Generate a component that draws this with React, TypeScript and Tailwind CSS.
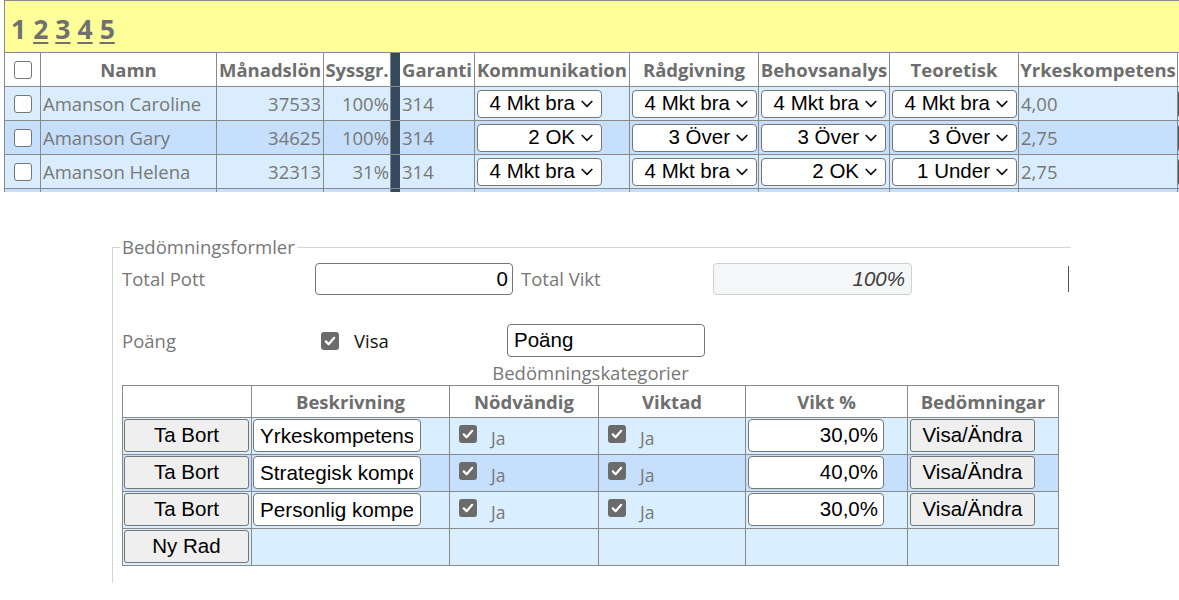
import React from "react";

const SANS = "font-['Open_Sans','Noto_Sans',sans-serif]";
const ARIAL = "font-['Liberation_Sans',Arial,sans-serif]";

function Chevron() {
  return (
    <svg width="12" height="8" viewBox="0 0 12 8" className="shrink-0">
      <path d="M1.2 1.5 L6 6.3 L10.8 1.5" fill="none" stroke="#111" strokeWidth="1.7" strokeLinecap="round" strokeLinejoin="round" />
    </svg>
  );
}

function Sel({ v }: { v: string }) {
  return (
    <div className={`ml-[2px] flex h-[28px] w-[125px] shrink-0 items-center justify-end gap-[6px] rounded-[4px] border border-[#767676] bg-white pr-[8px] text-[20.5px] leading-none text-black ${ARIAL}`}>
      {v ? <span className="whitespace-nowrap">{v}</span> : null}
      {v ? <Chevron /> : null}
    </div>
  );
}

function EmptyBox() {
  return <span className="block h-[18px] w-[18px] rounded-[3px] border border-[#767676] bg-white" />;
}

function GrayCheck() {
  return (
    <span className="flex h-[18px] w-[18px] shrink-0 items-center justify-center rounded-[3px] bg-[#6b6b6b]">
      <svg width="14" height="14" viewBox="0 0 14 14">
        <path d="M2.8 7.4 L5.6 10.2 L11.2 3.8" fill="none" stroke="#fff" strokeWidth="2.2" strokeLinecap="round" strokeLinejoin="round" />
      </svg>
    </span>
  );
}

type Row = {
  id: string;
  name: string;
  lon: string;
  sys: string;
  gar: string;
  k: string[];
  y: string;
  bg: string;
};

const rows: Row[] = [
  { id: "r1", name: "Amanson Caroline", lon: "37533", sys: "100%", gar: "314", k: ["4 Mkt bra", "4 Mkt bra", "4 Mkt bra", "4 Mkt bra"], y: "4,00", bg: "bg-[#d9edfe]" },
  { id: "r2", name: "Amanson Gary", lon: "34625", sys: "100%", gar: "314", k: ["2 OK", "3 Över", "3 Över", "3 Över"], y: "2,75", bg: "bg-[#c6dffc]" },
  { id: "r3", name: "Amanson Helena", lon: "32313", sys: "31%", gar: "314", k: ["4 Mkt bra", "4 Mkt bra", "2 OK", "1 Under"], y: "2,75", bg: "bg-[#d9edfe]" },
  { id: "r4", name: "", lon: "", sys: "", gar: "", k: ["", "", "", ""], y: "", bg: "bg-[#c6dffc]" },
];

const cell = "flex h-full shrink-0 items-center border-r border-[#8a8a8a]";

function TopHeader() {
  const h = `${cell} justify-center text-[18.5px] font-bold text-[#6e6e6e] whitespace-nowrap`;
  return (
    <div className="flex h-[34px] border-b border-[#8a8a8a] bg-white">
      <div className={`${cell} w-[36px] justify-center`}><EmptyBox /></div>
      <div className={`${h} w-[176px]`}>Namn</div>
      <div className={`${h} w-[107px]`}>Månadslön</div>
      <div className={`${h} w-[67px]`}>Syssgr.</div>
      <div className="h-full w-[9px] shrink-0 bg-[#34495e]" />
      <div className={`${h} w-[75px] justify-start pl-[2px]`}>Garanti</div>
      <div className={`${h} w-[155px]`}>Kommunikation</div>
      <div className={`${h} w-[129px]`}>Rådgivning</div>
      <div className={`${h} w-[131px]`}>Behovsanalys</div>
      <div className={`${h} w-[129px]`}>Teoretisk</div>
      <div className={`${h} w-[159px]`}>Yrkeskompetens</div>
      <div className={`${cell} w-[120px]`} />
    </div>
  );
}

function TopRow({ r }: { r: Row }) {
  const t = `${cell} text-[18.5px] text-[#777] whitespace-nowrap`;
  return (
    <div className={`flex h-[34px] border-b border-[#8a8a8a] ${r.bg}`}>
      <div className={`${cell} w-[36px] justify-center`}><EmptyBox /></div>
      <div className={`${t} w-[176px] pl-[2px]`}>{r.name}</div>
      <div className={`${t} w-[107px] justify-end pr-[2px]`}>{r.lon}</div>
      <div className={`${t} w-[67px] justify-end pr-[1px]`}>{r.sys}</div>
      <div className="h-full w-[9px] shrink-0 bg-[#34495e]" />
      <div className={`${t} w-[75px] pl-[2px]`}>{r.gar}</div>
      <div className={`${cell} w-[155px]`}><Sel v={r.k[0]} /></div>
      <div className={`${cell} w-[129px]`}><Sel v={r.k[1]} /></div>
      <div className={`${cell} w-[131px]`}><Sel v={r.k[2]} /></div>
      <div className={`${cell} w-[129px]`}><Sel v={r.k[3]} /></div>
      <div className={`${t} w-[159px] pl-[2px]`}>{r.y}</div>
      <div className={`${cell} w-[120px]`}>
        <div className="h-[28px] w-[110px] rounded-[4px] border-2 border-[#555] bg-white" />
      </div>
    </div>
  );
}

type Cat = { name: string; vikt: string; bg: string };
const cats: Cat[] = [
  { name: "Yrkeskompetens", vikt: "30,0%", bg: "bg-[#d9eefe]" },
  { name: "Strategisk kompetens", vikt: "40,0%", bg: "bg-[#c6dffc]" },
  { name: "Personlig kompetens", vikt: "30,0%", bg: "bg-[#d9eefe]" },
];

const btn = `flex h-[33px] items-center justify-center rounded-[3px] border border-[#767676] bg-[#efefef] text-[20.5px] leading-none text-black ${ARIAL}`;
const bcell = "h-full shrink-0 border-r border-[#8a8a8a]";

function CatRow({ c }: { c: Cat }) {
  return (
    <div className={`flex h-[37px] border-b border-[#8a8a8a] ${c.bg}`}>
      <div className={`${bcell} w-[129px] pt-[1px] pl-[1px]`}>
        <div className={`${btn} w-[125px]`}>Ta Bort</div>
      </div>
      <div className={`${bcell} w-[198px] pt-[1px] pl-[1px]`}>
        <input
          readOnly
          value={c.name}
          className={`h-[33px] w-[168px] rounded-[4px] border border-[#767676] bg-white pl-[6px] pr-[7px] text-[20.7px] text-black outline-none ${ARIAL}`}
        />
      </div>
      <div className={`${bcell} flex w-[149px] items-start pl-[9px]`}>
        <span className="mt-[7px]"><GrayCheck /></span>
        <span className="ml-[14px] mt-[10px] text-[17.5px] leading-[20px] text-[#777]">Ja</span>
      </div>
      <div className={`${bcell} flex w-[147px] items-start pl-[9px]`}>
        <span className="mt-[7px]"><GrayCheck /></span>
        <span className="ml-[14px] mt-[10px] text-[17.5px] leading-[20px] text-[#777]">Ja</span>
      </div>
      <div className={`${bcell} w-[162px] pt-[1px] pl-[2px]`}>
        <div className={`flex h-[33px] w-[136px] items-center justify-end rounded-[4px] border border-[#767676] bg-white pr-[5px] text-[20.5px] leading-none text-black ${ARIAL}`}>
          {c.vikt}
        </div>
      </div>
      <div className={`${bcell} w-[151px] pt-[1px] pl-[2px]`}>
        <div className={`${btn} w-[125px]`}>Visa/Ändra</div>
      </div>
    </div>
  );
}

export default function App() {
  const hc = `${bcell} flex items-center justify-center text-[18.5px] font-bold text-[#6e6e6e]`;
  return (
    <div className={`h-[600px] w-[1179px] overflow-hidden bg-white ${SANS}`}>
      {/* top grid */}
      <div className="ml-[4px] h-[192px] overflow-hidden border-l border-t border-[#8a8a8a]">
        <div className="flex h-[52px] items-start gap-[7px] border-b border-[#8a8a8a] bg-[#ffff99] pl-[6px] pt-[10px] text-[26.5px] font-bold leading-[36px] text-[#707070]">
          <span>1</span>
          <span className="underline decoration-2 underline-offset-[3px]">2</span>
          <span className="underline decoration-2 underline-offset-[3px]">3</span>
          <span className="underline decoration-2 underline-offset-[3px]">4</span>
          <span className="underline decoration-2 underline-offset-[3px]">5</span>
        </div>
        <div className="w-[1400px]">
          <TopHeader />
          {rows.map((r) => (
            <TopRow key={r.id} r={r} />
          ))}
        </div>
      </div>

      {/* formulas */}
      <fieldset className="ml-[112px] mt-[43px] w-[959px] border-l border-t border-[#cfd9cf] pb-[17px] pl-[9px]">
        <legend className="-ml-[2px] px-[2px] text-[18.5px] leading-[24px] text-[#777]">Bedömningsformler</legend>

        <div className="mt-[4px] flex h-[32px] items-center">
          <div className="w-[193px] shrink-0 text-[18.5px] text-[#777]">Total Pott</div>
          <div className={`flex h-[32px] w-[198px] shrink-0 items-center justify-end rounded-[4px] border border-[#767676] bg-white pr-[4px] text-[20.5px] leading-none text-black ${ARIAL}`}>0</div>
          <div className="ml-[8px] w-[192px] shrink-0 text-[18.5px] text-[#777]">Total Vikt</div>
          <div className={`flex h-[32px] w-[199px] shrink-0 items-center justify-end rounded-[4px] border border-[#cbd3cb] bg-[#f5f6f7] pr-[6px] text-[20.5px] italic leading-none text-[#3c3c3c] ${ARIAL}`}>100%</div>
          <div className="ml-[156px] h-[26px] w-[1px] shrink-0 bg-[#555]" />
        </div>

        <div className="mt-[29px] flex h-[33px] items-center">
          <div className="w-[199px] shrink-0 text-[18.5px] text-[#777]">Poäng</div>
          <GrayCheck />
          <div className="ml-[15px] w-[153px] shrink-0 text-[18.5px] text-[#111]">Visa</div>
          <div className={`flex h-[33px] w-[198px] shrink-0 items-center rounded-[4px] border border-[#767676] bg-white pl-[6px] text-[20.5px] leading-none text-black ${ARIAL}`}>Poäng</div>
        </div>

        <div className="mt-[4px] w-[937px] text-center text-[18.5px] leading-[24px] text-[#777]">Bedömningskategorier</div>

        <div className="w-[937px] border-l border-t border-[#8a8a8a]">
          <div className="flex h-[32px] border-b border-[#8a8a8a] bg-white">
            <div className={`${hc} w-[129px]`} />
            <div className={`${hc} w-[198px]`}>Beskrivning</div>
            <div className={`${hc} w-[149px]`}>Nödvändig</div>
            <div className={`${hc} w-[147px]`}>Viktad</div>
            <div className={`${hc} w-[162px]`}>Vikt %</div>
            <div className={`${hc} w-[151px]`}>Bedömningar</div>
          </div>
          {cats.map((c) => (
            <CatRow key={c.name} c={c} />
          ))}
          <div className="flex h-[37px] border-b border-[#8a8a8a] bg-[#d9eefe]">
            <div className={`${bcell} w-[129px] pt-[1px] pl-[1px]`}>
              <div className={`${btn} w-[125px]`}>Ny Rad</div>
            </div>
            <div className={`${bcell} w-[198px]`} />
            <div className={`${bcell} w-[149px]`} />
            <div className={`${bcell} w-[147px]`} />
            <div className={`${bcell} w-[162px]`} />
            <div className={`${bcell} w-[151px]`} />
          </div>
        </div>
      </fieldset>
    </div>
  );
}
